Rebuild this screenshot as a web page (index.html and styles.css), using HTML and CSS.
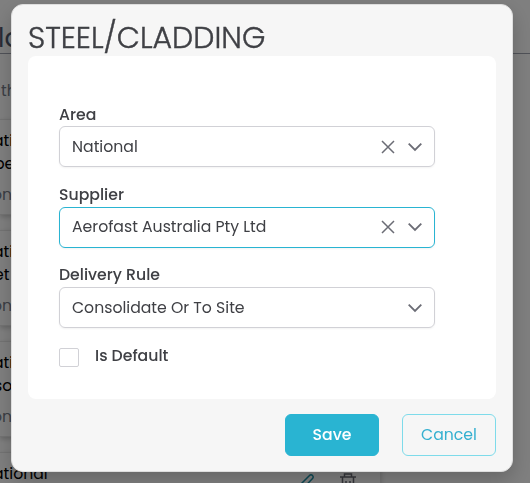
FILE: index.html
```
<!DOCTYPE html>
<html lang="en">
<head>
    <meta charset="utf-8">
    <title>STEEL/CLADDING</title>
    <link rel="stylesheet" href="styles.css">
</head>
<body>
    <div class="page">
        <div class="page-heading">la</div>
        <div class="page-intro">th</div>
        <div class="rule-card">
            <div class="rule-name">ati</div>
            <div class="rule-type">pe</div>
            <div class="rule-note">on</div>
        </div>
        <div class="rule-card">
            <div class="rule-name">ati</div>
            <div class="rule-type">et</div>
            <div class="rule-note">on</div>
        </div>
        <div class="rule-card">
            <div class="rule-name">ati</div>
            <div class="rule-type">so</div>
            <div class="rule-note">on</div>
        </div>
        <div class="rule-card">
            <div class="rule-name">ational</div>
            <div class="rule-actions">
                <svg class="icon-edit" width="16" height="18" viewBox="0 0 16 18"><path d="M1 16l1-5 8.500-8.500a2 2 0 0 1 3 0a2 2 0 0 1 0 3L5 14.500z"/></svg>
                <svg class="icon-trash" width="16" height="18" viewBox="0 0 16 18"><path d="M0 4h16M4.500 4V1h7v3M2.500 4v13h11V4M6 8v6M10 8v6"/></svg>
            </div>
        </div>
    </div>

    <div class="overlay">
        <div class="modal">
            <h1 class="modal-title">STEEL/CLADDING</h1>
            <div class="modal-body">
                <div class="field">
                    <label class="label label-area">Area</label>
                    <div class="select">
                        <span class="value">National</span>
                        <svg class="clear" width="14" height="14" viewBox="0 0 14 14"><path d="M1 1l12 12M13 1L1 13"/></svg>
                        <svg class="arrow" width="14" height="14" viewBox="0 0 14 14"><path d="M.7 3.700L7 10l6.300-6.300"/></svg>
                    </div>
                </div>
                <div class="field">
                    <label class="label">Supplier</label>
                    <div class="select focused">
                        <span class="value">Aerofast Australia Pty Ltd</span>
                        <svg class="clear" width="14" height="14" viewBox="0 0 14 14"><path d="M1 1l12 12M13 1L1 13"/></svg>
                        <svg class="arrow" width="14" height="14" viewBox="0 0 14 14"><path d="M.7 3.700L7 10l6.300-6.300"/></svg>
                    </div>
                </div>
                <div class="field">
                    <label class="label">Delivery Rule</label>
                    <div class="select">
                        <span class="value">Consolidate Or To Site</span>
                        <svg class="arrow" width="14" height="14" viewBox="0 0 14 14"><path d="M.7 3.700L7 10l6.300-6.300"/></svg>
                    </div>
                </div>
                <div class="check-row">
                    <span class="checkbox"></span>
                    <label class="label">Is Default</label>
                </div>
            </div>
            <div class="modal-footer">
                <button class="btn btn-save">Save</button>
                <button class="btn btn-cancel">Cancel</button>
            </div>
        </div>
    </div>
</body>
</html>
```

FILE: styles.css
```
* {
    box-sizing: border-box;
}

body {
    margin: 0;
    height: 100vh;
    overflow: hidden;
    font-family: Poppins, Inter, sans-serif;
    font-size: 15.700px;
    color: #3f4045;
    background: #fff;
}

svg {
    fill: none;
    stroke: #6b6c75;
    stroke-width: 1.5;
    flex: none;
}

/* list behind the dialog */
.page {
    height: 483px;
    overflow: hidden;
}

.page-heading {
    height: 54px;
    padding-top: 22px;
    font-size: 26px;
    line-height: 32px;
    text-indent: -2px;
    color: #50586c;
    border-bottom: 1px solid #a0a4b0;
}

.page-intro {
    height: 65px;
    padding: 24px 0 0 1px;
    line-height: 26px;
    color: #777d8a;
}

.rule-card {
    width: 381px;
    height: 96px;
    margin-bottom: 15px;
    padding-top: 8px;
    color: #000;
    border: 1px solid #e6e6e6;
    border-left: 0;
    box-shadow: 0 2px 5px rgba(0, 0, 0, 0.2);
}

.rule-name {
    height: 24px;
    line-height: 25px;
    text-indent: -7px;
}

.rule-type {
    height: 24px;
    line-height: 23px;
    text-indent: -6px;
}

.rule-note {
    padding-top: 7px;
    line-height: 24px;
    text-indent: -8px;
    color: #777d8a;
}

.rule-actions {
    display: flex;
    gap: 25px;
    justify-content: flex-end;
    margin-top: -12px;
    padding-right: 24px;
}

.icon-edit {
    stroke: #1c8fa6;
}

/* dialog */
.overlay {
    position: fixed;
    inset: 0;
    padding: 4px 17px 12px 11px;
    background: rgba(0, 0, 0, 0.5);
}

.modal {
    width: 502px;
    height: 468px;
    padding: 15px 16px;
    background: #f6f6f6;
    border: 1px solid #dedede;
    border-radius: 12px;
    box-shadow: 0 8px 20px rgba(0, 0, 0, 0.2);
}

.modal-title {
    height: 36px;
    margin: 0;
    font-size: 30px;
    font-weight: 300;
    line-height: 36px;
    white-space: nowrap;
    -webkit-text-stroke: 0.400px #3f4045;
}

.modal-body {
    height: 343px;
    padding: 46px 61px 0 31px;
    background: #fff;
    border-radius: 8px;
}

.field {
    height: 80px;
    margin-bottom: 0.500px;
}

.label {
    display: block;
    height: 24px;
    font-weight: 500;
    line-height: 24px;
}

.label-area {
    line-height: 26px;
}

.select {
    display: flex;
    align-items: center;
    height: 41px;
    padding: 0 12px;
    border: 1px solid #d1d1d6;
    border-radius: 6px;
    box-shadow: 0 1px 2px rgba(0, 0, 0, 0.05);
}

.select.focused {
    border-color: #29b4d2;
}

.focused .value {
    padding-bottom: 1px;
}

.value {
    flex: 1;
    white-space: nowrap;
}

.arrow {
    margin-left: 13px;
    stroke-width: 1.800;
}

.check-row {
    display: flex;
    gap: 16px;
}

.checkbox {
    width: 20px;
    height: 19px;
    margin-top: 4px;
    border: 1px solid #d1d1d6;
    border-radius: 2px;
}

.modal-footer {
    display: flex;
    justify-content: flex-end;
    gap: 23px;
    padding-top: 15px;
}

.btn {
    width: 94px;
    height: 42px;
    padding: 0 0 2px;
    font-family: inherit;
    font-size: 15.700px;
    border: 1px solid #29b4d2;
    border-radius: 6px;
}

.btn-save {
    font-weight: 500;
    color: #fff;
    background: #29b4d2;
}

.btn-cancel {
    color: #35b0d0;
    background: transparent;
    border-color: #7edbea;
}
```
